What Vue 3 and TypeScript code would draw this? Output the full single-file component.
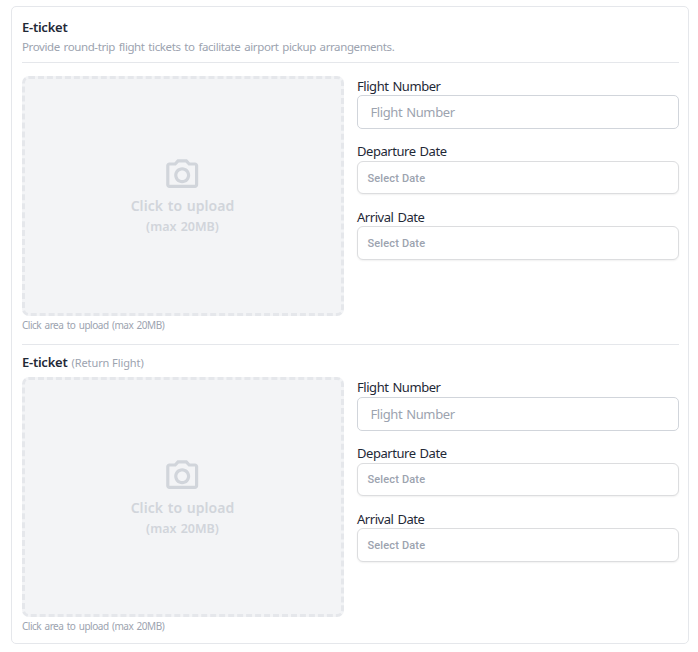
<script setup lang="ts">
import { reactive } from 'vue'

interface Ticket {
  id: string
  note: string
  description: string
  flightNumber: string
}

const tickets = reactive<Ticket[]>([
  {
    id: 'outbound',
    note: '',
    description: 'Provide round-trip flight tickets to facilitate airport pickup arrangements.',
    flightNumber: '',
  },
  { id: 'return', note: '(Return Flight)', description: '', flightNumber: '' },
])

const dateFields: string[] = ['Departure Date', 'Arrival Date']
</script>

<template>
  <main class="card">
    <section v-for="ticket in tickets" :key="ticket.id" class="ticket" :class="ticket.id">
      <header class="head">
        <h2 class="title">E-ticket <span v-if="ticket.note" class="note">{{ ticket.note }}</span></h2>
        <p v-if="ticket.description" class="description">{{ ticket.description }}</p>
      </header>
      <div class="columns">
        <div class="upload-column">
          <button type="button" class="upload">
            <svg class="camera" viewBox="0 0 24 24" aria-hidden="true">
              <path d="M20 4h-3.17L15 2H9L7.17 4H4c-1.1 0-2 .9-2 2v12c0 1.1.9 2 2 2h16c1.1 0 2-.9 2-2V6c0-1.1-.9-2-2-2zm0 14H4V6h4.05l1.83-2h4.24l1.83 2H20v12zM12 7c-2.76 0-5 2.24-5 5s2.24 5 5 5 5-2.24 5-5-2.24-5-5-5zm0 8c-1.65 0-3-1.35-3-3s1.35-3 3-3 3 1.35 3 3-1.35 3-3 3z" />
            </svg>
            <span class="upload-title">Click to upload</span>
            <span class="upload-limit">(max 20MB)</span>
          </button>
          <p class="caption">Click area to upload (max 20MB)</p>
        </div>
        <div class="fields">
          <label class="field">
            <span class="label">Flight Number</span>
            <input v-model="ticket.flightNumber" class="control" type="text" placeholder="Flight Number" />
          </label>
          <div v-for="name in dateFields" :key="name" class="field">
            <span class="label">{{ name }}</span>
            <button type="button" class="control date">Select Date</button>
          </div>
        </div>
      </div>
    </section>
  </main>
</template>

<style>
body {
  margin: 0;
  background: #fff;
}
</style>

<style scoped>
* {
  box-sizing: border-box;
}

.card {
  width: 678px;
  height: 638px;
  margin: 6px 0 0 11px;
  padding: 10px 9px 0 10px;
  border: 1px solid #e5e7eb;
  border-radius: 5px;
  font-family: 'Noto Sans', 'Open Sans', sans-serif;
  color: #1f2937;
}

.outbound .head {
  height: 46px;
  margin-bottom: 12.5px;
  border-bottom: 1px solid #e5e7eb;
}

.return {
  margin-top: 10.9px;
  border-top: 1px solid #e5e7eb;
}

.return .head {
  height: 32px;
  padding-top: 7px;
}

.title {
  margin: 0;
  font-size: 13px;
  font-weight: 600;
  line-height: 20px;
  letter-spacing: -0.25px;
  white-space: nowrap;
}

.note {
  margin-left: 1px;
  font-size: 11px;
  font-weight: 400;
  letter-spacing: -0.1px;
  color: #9ca3af;
}

.description {
  margin: 0;
  font-size: 11.5px;
  line-height: 19px;
  letter-spacing: -0.4px;
  word-spacing: 1.2px;
  white-space: nowrap;
  color: #9ca3af;
}

.columns {
  display: grid;
  grid-template-columns: 322px 322px;
  gap: 13px;
}

.upload {
  display: flex;
  flex-direction: column;
  align-items: center;
  width: 100%;
  height: 240px;
  padding: 77px 2px 0 0;
  border: 3px dashed #e5e7eb;
  border-radius: 7px;
  background: #f3f4f6;
  font-family: inherit;
  font-weight: 600;
  color: #d1d5db;
}

.camera {
  width: 38.4px;
  height: 38.4px;
  fill: currentColor;
}

.upload-title {
  margin-top: 2px;
  padding-left: 1px;
  font-size: 14px;
  line-height: 20px;
  letter-spacing: 0.05px;
  word-spacing: 1px;
}

.upload-limit {
  padding-left: 1px;
  font-size: 12.5px;
  line-height: 21px;
  word-spacing: 1px;
}

.caption {
  height: 18px;
  margin: 0;
  font-size: 10px;
  line-height: 18.8px;
  letter-spacing: -0.48px;
  word-spacing: 1.2px;
  color: #9ca3af;
}

.fields {
  display: flex;
  flex-direction: column;
  gap: 12.3px;
}

.field {
  display: flex;
  flex-direction: column;
}

.label {
  height: 19.7px;
  font-size: 13px;
  line-height: 20px;
  letter-spacing: -0.45px;
  word-spacing: 1px;
}

.control {
  width: 100%;
  height: 33.6px;
  padding: 0 12.5px;
  border: 1px solid #d1d5db;
  border-radius: 5px;
  outline: none;
  background: #fff;
  font-family: inherit;
  font-size: 13px;
  letter-spacing: -0.4px;
  word-spacing: 1px;
  text-align: left;
}

.control::placeholder {
  color: #9ca3af;
  opacity: 1;
}

.date {
  padding: 1px 9.5px 0;
  border-color: #dcdddf;
  border-radius: 6px;
  box-shadow: 0 1px 2px rgba(0, 0, 0, 0.06);
  font-family: Roboto, sans-serif;
  font-size: 11px;
  font-weight: 500;
  letter-spacing: 0.15px;
  word-spacing: 0;
  color: #9ca3af;
}
</style>
